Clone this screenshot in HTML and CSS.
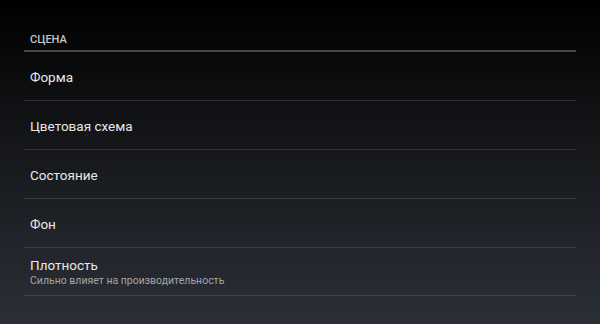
FILE: index.html
```html
<!DOCTYPE html>
<html>
	<head>
		<meta content="text/html;charset=utf-8" http-equiv="Content-Type" />
		<title>Настройки</title>
		<link rel="stylesheet" href="styles.css">
	</head>
	<body>
		<div class="prefs">
			<div class="category">СЦЕНА</div>
			<div class="pref">
				<div class="pref-title">Форма</div>
			</div>
			<div class="pref">
				<div class="pref-title">Цветовая схема</div>
			</div>
			<div class="pref">
				<div class="pref-title">Состояние</div>
			</div>
			<div class="pref">
				<div class="pref-title">Фон</div>
			</div>
			<div class="pref pref-last">
				<div class="pref-title">Плотность</div>
				<div class="pref-summary">Сильно влияет на производительность</div>
			</div>
		</div>
	</body>
</html>
```

FILE: styles.css
```css
html {
	height: 100%;
}

body {
	margin: 0px;
	height: 100%;
	overflow: hidden;
	font-family: Roboto, "Noto Sans", sans-serif;
	background: linear-gradient(to bottom, #000000 0%, #15171a 45%, #2b2f37 100%);
}

.prefs {
	padding: 0px 24px;
}

.category {
	padding: 33px 6px 3px 6px;
	line-height: 14px;
	font-size: 11px;
	font-weight: 500;
	color: #c4c4c4;
	border-bottom: 2px solid #474849;
}

.pref {
	display: flex;
	flex-direction: column;
	justify-content: center;
	box-sizing: border-box;
	height: 49px;
	padding: 2px 0px 0px 6px;
	border-bottom: 1px solid rgba(255, 255, 255, 0.12);
}

.pref-last {
	height: 48px;
	padding-top: 1px;
}

.pref-title {
	font-size: 13.5px;
	line-height: 17px;
	color: #e8e8e8;
}

.pref-summary {
	font-size: 10.5px;
	line-height: 14px;
	color: #a4a6a9;
}
```
